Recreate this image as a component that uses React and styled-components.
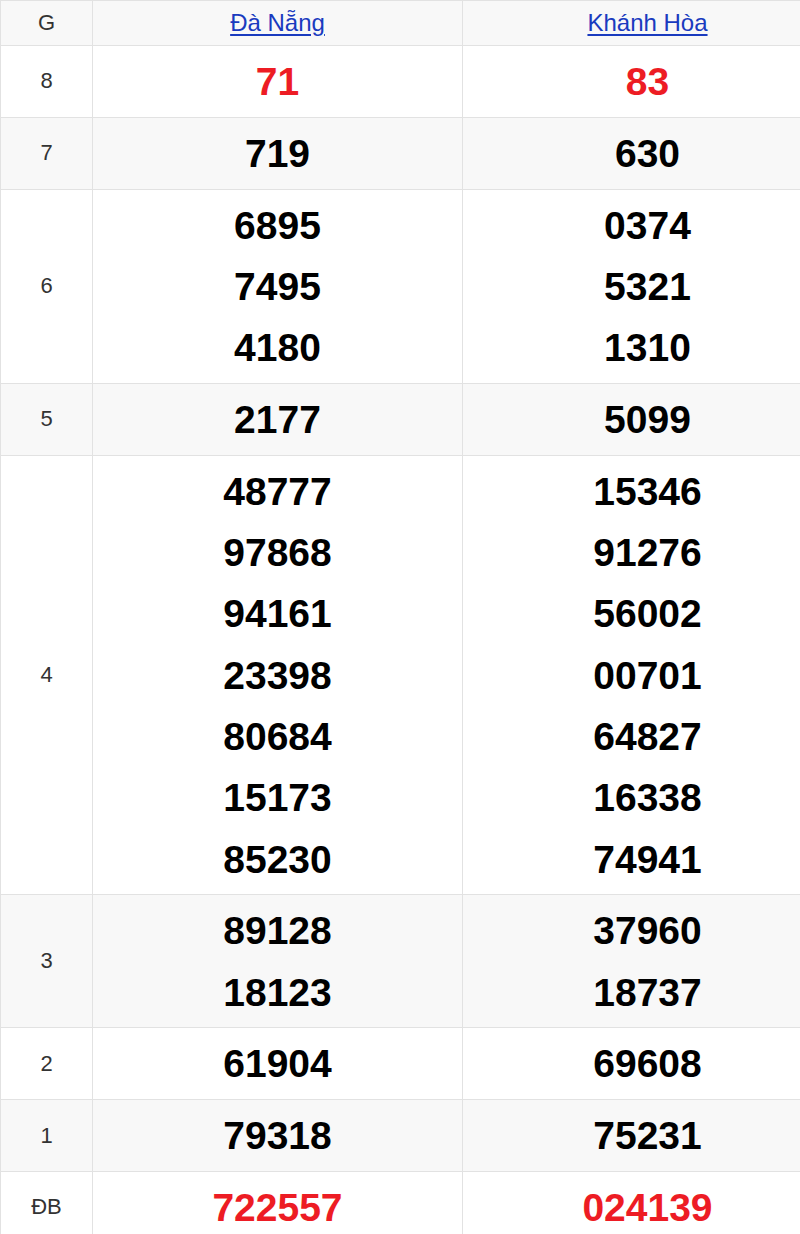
import React from 'react';
import styled, { createGlobalStyle } from 'styled-components';

const GlobalStyle = createGlobalStyle`
    body {
        margin: 0;
        background: #fff;
        font-family: "Liberation Sans", Arial, sans-serif;
        overflow: hidden;
    }
`;

const Wrapper = styled.div`
    width: 800px;
    overflow: hidden;
`;

const Table = styled.table`
    width: 832px;
    border-collapse: collapse;
    table-layout: fixed;
    font-family: "Liberation Sans", Arial, sans-serif;
`;

const Row = styled.tr`
    background: ${(p) => (p.$shaded ? '#f8f8f8' : '#fff')};
`;

const HeadCell = styled.th`
    height: 44px;
    padding: 0;
    font-weight: normal;
    font-size: 22px;
    color: #333;
    border: 1px solid #e2e2e2;
    text-align: center;
    vertical-align: middle;
`;

const HeadLink = styled.a`
    font-size: 24px;
    color: #1a3bbf;
    text-decoration: underline;
    text-underline-offset: 3px;
`;

const LabelCell = styled.td`
    padding: 0;
    font-size: 22px;
    color: #333;
    border: 1px solid #e2e2e2;
    text-align: center;
    vertical-align: middle;
`;

const NumberCell = styled.td`
    padding: 5px 0 4.5px;
    border: 1px solid #e2e2e2;
    text-align: center;
    vertical-align: middle;
`;

const Num = styled.div`
    font-size: 39px;
    line-height: 61.3px;
    font-weight: bold;
    color: ${(p) => (p.$red ? '#ed1c24' : '#000')};
`;

const rows = [
    { label: '8', a: ['71'], b: ['83'], red: true },
    { label: '7', a: ['719'], b: ['630'] },
    { label: '6', a: ['6895', '7495', '4180'], b: ['0374', '5321', '1310'] },
    { label: '5', a: ['2177'], b: ['5099'] },
    {
        label: '4',
        a: ['48777', '97868', '94161', '23398', '80684', '15173', '85230'],
        b: ['15346', '91276', '56002', '00701', '64827', '16338', '74941'],
    },
    { label: '3', a: ['89128', '18123'], b: ['37960', '18737'] },
    { label: '2', a: ['61904'], b: ['69608'] },
    { label: '1', a: ['79318'], b: ['75231'] },
    { label: 'ĐB', a: ['722557'], b: ['024139'], red: true },
];

const App = () => (
    <Wrapper>
        <GlobalStyle />
        <Table>
            <colgroup>
                <col style={{ width: 92 }} />
                <col style={{ width: 370 }} />
                <col style={{ width: 370 }} />
            </colgroup>
            <thead>
                <Row $shaded>
                    <HeadCell>G</HeadCell>
                    <HeadCell>
                        <HeadLink href="#">Đà Nẵng</HeadLink>
                    </HeadCell>
                    <HeadCell>
                        <HeadLink href="#">Khánh Hòa</HeadLink>
                    </HeadCell>
                </Row>
            </thead>
            <tbody>
                {rows.map((r, i) => (
                    <Row key={r.label} $shaded={i % 2 === 1}>
                        <LabelCell>{r.label}</LabelCell>
                        <NumberCell>
                            {r.a.map((n) => (
                                <Num key={n} $red={r.red}>{n}</Num>
                            ))}
                        </NumberCell>
                        <NumberCell>
                            {r.b.map((n) => (
                                <Num key={n} $red={r.red}>{n}</Num>
                            ))}
                        </NumberCell>
                    </Row>
                ))}
            </tbody>
        </Table>
    </Wrapper>
);

export default App;
